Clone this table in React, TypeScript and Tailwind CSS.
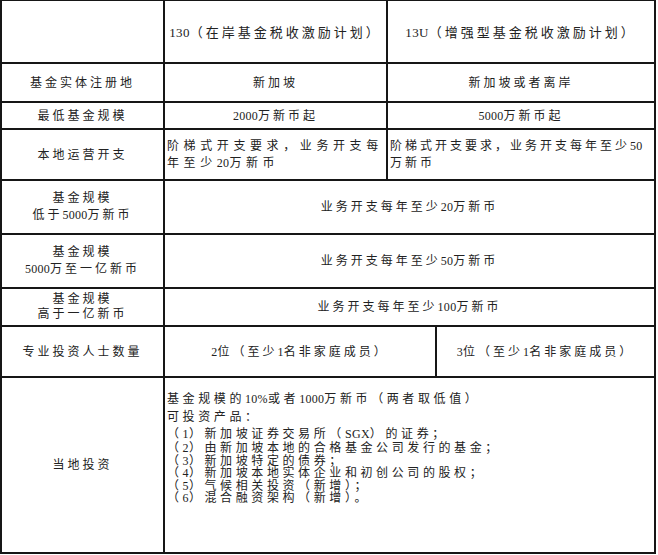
import React from "react";

const cell = "bg-white flex items-center justify-center text-center";

function T({ s }: { s: string }) {
  const parts = s.split(/([\x20-\x7e]+)/).filter((p) => p.length > 0);
  return (
    <>
      {parts.map((p, i) =>
        /^[\x20-\x7e]+$/.test(p) ? (
          <span key={i} className="tracking-[0.3px]">
            {p}
          </span>
        ) : (
          <React.Fragment key={i}>{p}</React.Fragment>
        )
      )}
    </>
  );
}

export default function App() {
  return (
    <div
      className="w-[658px] h-[555px] bg-white text-[12px] text-[#222] tracking-[3px]"
      style={{ fontFamily: "'Liberation Serif', 'Noto Sans CJK SC', serif" }}
    >
      <div className="grid w-[656px] bg-[#161616] gap-[2px] pt-[1px] pl-[2px] pr-[2px] pb-[2px] grid-cols-[161px_221px_47px_217px] grid-rows-[61px_37px_25px_49px_52px_52px_36px_49px_174px]">
        {/* Row 1 */}
        <div className="bg-white" />
        <div className={`${cell} text-[13px] pt-[3px]`}>
          <T s="130（在岸基金税收激励计划）" />
        </div>
        <div className={`${cell} col-span-2 text-[13px] pt-[3px]`}>
          <T s="13U（增强型基金税收激励计划）" />
        </div>

        {/* Row 2 */}
        <div className={cell}>基金实体注册地</div>
        <div className={cell}>新加坡</div>
        <div className={`${cell} col-span-2`}>新加坡或者离岸</div>

        {/* Row 3 */}
        <div className={cell}>最低基金规模</div>
        <div className={cell}>
          <T s="2000万新币起" />
        </div>
        <div className={`${cell} col-span-2`}>
          <T s="5000万新币起" />
        </div>

        {/* Row 4 */}
        <div className={cell}>本地运营开支</div>
        <div className="bg-white flex items-center pl-[2px] leading-[17px] tracking-[4.6px]">
          <div>
            <T s="阶梯式开支要求，业务开支每年至少20万新币" />
          </div>
        </div>
        <div className="bg-white flex items-center pl-[2px] leading-[17px] col-span-2">
          <div>
            <T s="阶梯式开支要求，业务开支每年至少50万新币" />
          </div>
        </div>

        {/* Row 5 */}
        <div className={`${cell} flex-col leading-[17px]`}>
          <div>基金规模</div>
          <div>
            <T s="低于5000万新币" />
          </div>
        </div>
        <div className={`${cell} col-span-3`}>
          <T s="业务开支每年至少20万新币" />
        </div>

        {/* Row 6 */}
        <div className={`${cell} flex-col leading-[17px]`}>
          <div>基金规模</div>
          <div>
            <T s="5000万至一亿新币" />
          </div>
        </div>
        <div className={`${cell} col-span-3`}>
          <T s="业务开支每年至少50万新币" />
        </div>

        {/* Row 7 */}
        <div className={`${cell} flex-col leading-[15px]`}>
          <div>基金规模</div>
          <div>高于一亿新币</div>
        </div>
        <div className={`${cell} col-span-3`}>
          <T s="业务开支每年至少100万新币" />
        </div>

        {/* Row 8 */}
        <div className={cell}>专业投资人士数量</div>
        <div className={`${cell} col-span-2`}>
          <T s="2位（至少1名非家庭成员）" />
        </div>
        <div className={cell}>
          <T s="3位（至少1名非家庭成员）" />
        </div>

        {/* Row 9 */}
        <div className={cell}>当地投资</div>
        <div className="bg-white col-span-3 pl-[2px] pt-[12px] tracking-[3.6px]">
          <div className="leading-[18px]">
            <T s="基金规模的10%或者1000万新币（两者取低值）" />
          </div>
          <div className="leading-[18px]">可投资产品：</div>
          <div className="leading-[16px]">
            <T s="（1）新加坡证券交易所（SGX）的证券；" />
          </div>
          <div className="leading-[12.6px]">
            <T s="（2）由新加坡本地的合格基金公司发行的基金；" />
          </div>
          <div className="leading-[12.6px]">
            <T s="（3）新加坡特定的债券；" />
          </div>
          <div className="leading-[12.6px]">
            <T s="（4）新加坡本地实体企业和初创公司的股权；" />
          </div>
          <div className="leading-[12.6px]">
            <T s="（5）气候相关投资（新增）；" />
          </div>
          <div className="leading-[12.6px]">
            <T s="（6）混合融资架构（新增）。" />
          </div>
        </div>
      </div>
    </div>
  );
}
